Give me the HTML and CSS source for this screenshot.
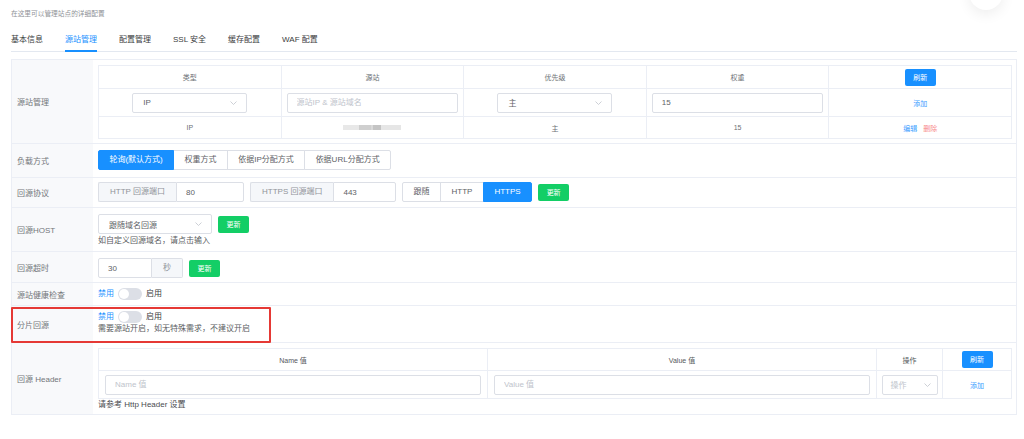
FILE: index.html
```html
<!DOCTYPE html>
<html lang="zh-CN">
<head>
<meta charset="utf-8">
<title>源站管理</title>
<link rel="stylesheet" href="styles.css">
</head>
<body>
<div class="avatar"></div>
<div class="page">
  <p class="subtitle">在这里可以管理站点的详细配置</p>
  <nav class="tabs">
    <span class="tab">基本信息</span>
    <span class="tab active">源站管理</span>
    <span class="tab">配置管理</span>
    <span class="tab">SSL 安全</span>
    <span class="tab">缓存配置</span>
    <span class="tab">WAF 配置</span>
  </nav>

  <div class="panel">
    <!-- 源站管理 -->
    <div class="row">
      <div class="label">源站管理</div>
      <div class="cell cell-origin">
        <table class="tbl">
          <thead>
            <tr>
              <th><div class="h h22">类型</div></th>
              <th><div class="h h22">源站</div></th>
              <th><div class="h h22">优先级</div></th>
              <th><div class="h h22">权重</div></th>
              <th><div class="h h22"><button class="btn-sm btn-blue">刷新</button></div></th>
            </tr>
          </thead>
          <tbody>
            <tr>
              <td><div class="h h27"><div class="select w115"><span>IP</span><svg class="chev" width="7" height="4" viewBox="0 0 7 4"><path d="M0.5 0.5L3.5 3.5L6.5 0.5" fill="none" stroke="#c0c4cc" stroke-width="0.8"/></svg></div></div></td>
              <td><div class="h h27"><input class="inp fill" placeholder="源站IP &amp; 源站域名"></div></td>
              <td><div class="h h27"><div class="select w115"><span>主</span><svg class="chev" width="7" height="4" viewBox="0 0 7 4"><path d="M0.5 0.5L3.5 3.5L6.5 0.5" fill="none" stroke="#c0c4cc" stroke-width="0.8"/></svg></div></div></td>
              <td><div class="h h27"><input class="inp fill" value="15"></div></td>
              <td><div class="h h27"><span class="link">添加</span></div></td>
            </tr>
            <tr>
              <td><div class="h h21 small">IP</div></td>
              <td><div class="h h21"><span class="masked"></span></div></td>
              <td><div class="h h21 small">主</div></td>
              <td><div class="h h21 small">15</div></td>
              <td><div class="h h21"><span class="link">编辑</span><span class="link del">删除</span></div></td>
            </tr>
          </tbody>
        </table>
      </div>
    </div>

    <!-- 负载方式 -->
    <div class="row">
      <div class="label">负载方式</div>
      <div class="cell cell-load">
        <div class="seg">
          <button class="btn on">轮询(默认方式)</button>
          <button class="btn">权重方式</button>
          <button class="btn">依据IP分配方式</button>
          <button class="btn">依据URL分配方式</button>
        </div>
      </div>
    </div>

    <!-- 回源协议 -->
    <div class="row">
      <div class="label">回源协议</div>
      <div class="cell cell-proto">
        <div class="inline">
          <div class="igroup port"><span class="addon">HTTP 回源端口</span><input class="inp" value="80"></div>
          <div class="igroup port"><span class="addon">HTTPS 回源端口</span><input class="inp" value="443"></div>
          <div class="seg seg-proto">
            <button class="btn">跟随</button>
            <button class="btn">HTTP</button>
            <button class="btn on">HTTPS</button>
          </div>
          <button class="btn-sm btn-green">更新</button>
        </div>
      </div>
    </div>

    <!-- 回源HOST -->
    <div class="row">
      <div class="label">回源HOST</div>
      <div class="cell cell-host">
        <div class="inline">
          <div class="select w114"><span>跟随域名回源</span><svg class="chev" width="7" height="4" viewBox="0 0 7 4"><path d="M0.5 0.5L3.5 3.5L6.5 0.5" fill="none" stroke="#c0c4cc" stroke-width="0.8"/></svg></div>
          <button class="btn-sm btn-green">更新</button>
        </div>
        <div class="hint">如自定义回源域名，请点击输入</div>
      </div>
    </div>

    <!-- 回源超时 -->
    <div class="row">
      <div class="label">回源超时</div>
      <div class="cell cell-timeout">
        <div class="inline">
          <div class="igroup secs"><input class="inp" value="30"><span class="addon">秒</span></div>
          <button class="btn-sm btn-green">更新</button>
        </div>
      </div>
    </div>

    <!-- 源站健康检查 -->
    <div class="row">
      <div class="label">源站健康检查</div>
      <div class="cell cell-health">
        <div class="switch-line l16">
          <span class="off-text">禁用</span>
          <span class="switch"><span class="knob"></span></span>
          <span class="on-text">启用</span>
        </div>
      </div>
    </div>

    <!-- 分片回源 -->
    <div class="row">
      <div class="label">分片回源</div>
      <div class="cell cell-range">
        <div class="switch-line l12">
          <span class="off-text">禁用</span>
          <span class="switch"><span class="knob"></span></span>
          <span class="on-text">启用</span>
        </div>
        <div class="hint l12">需要源站开启，如无特殊需求，不建议开启</div>
      </div>
      <div class="mark"></div>
    </div>

    <!-- 回源 Header -->
    <div class="row">
      <div class="label">回源 Header</div>
      <div class="cell cell-header">
        <table class="tbl tbl2">
          <colgroup>
            <col class="c-name"><col class="c-value"><col class="c-op"><col class="c-act">
          </colgroup>
          <thead>
            <tr>
              <th><div class="h h21 th2">Name 值</div></th>
              <th><div class="h h21 th2">Value 值</div></th>
              <th><div class="h h21 th2">操作</div></th>
              <th><div class="h h21"><button class="btn-sm btn-blue">刷新</button></div></th>
            </tr>
          </thead>
          <tbody>
            <tr>
              <td><div class="h h27"><input class="inp fill6" placeholder="Name 值"></div></td>
              <td><div class="h h27"><input class="inp fill6" placeholder="Value 值"></div></td>
              <td><div class="h h27"><div class="select w56 ph"><span>操作</span><svg class="chev" width="7" height="4" viewBox="0 0 7 4"><path d="M0.5 0.5L3.5 3.5L6.5 0.5" fill="none" stroke="#c0c4cc" stroke-width="0.8"/></svg></div></div></td>
              <td><div class="h h27"><span class="link">添加</span></div></td>
            </tr>
          </tbody>
        </table>
        <div class="hint l12 dark">请参考 Http Header 设置</div>
      </div>
    </div>
  </div>
</div>
</body>
</html>
```

FILE: styles.css
```css
* { box-sizing: border-box; }

html, body {
  margin: 0;
  padding: 0;
  background: #fff;
}

body {
  position: relative;
  overflow: hidden;
  font-family: "Liberation Sans", "Noto Sans CJK SC", sans-serif;
  font-size: 8px;
  color: #606266;
}

.avatar {
  position: absolute;
  top: -24px;
  left: 969px;
  width: 34px;
  height: 34px;
  border-radius: 50%;
  background: #fff;
  box-shadow: 0 4px 14px rgba(0, 0, 0, 0.07);
}

.page {
  padding: 0 7px 0 11px;
}

.subtitle {
  margin: 0;
  padding-top: 9px;
  line-height: 10px;
  font-size: 6.7px;
  color: #8f9297;
}

.tabs {
  display: flex;
  margin-top: 9px;
  margin-bottom: 7px;
  border-bottom: 1px solid #e3e8f0;
}

.tab {
  position: relative;
  padding: 6px 0 5px;
  margin-right: 22px;
  line-height: 12px;
  color: #3a3c40;
}

.tab.active { color: #1890ff; }

.tab.active::after {
  content: "";
  position: absolute;
  left: 0;
  right: 0;
  bottom: -1px;
  height: 2px;
  background: #1890ff;
}

/* panel */
.panel {
  border: 1px solid #ebeef5;
  border-bottom: none;
}

.row {
  position: relative;
  display: grid;
  grid-template-columns: 81px 1fr;
  border-bottom: 1px solid #ebeef5;
}

.label {
  display: flex;
  align-items: center;
  padding-left: 5px;
  background: #f8f9fb;
  color: #73767a;
}

.cell {
  display: flex;
  flex-direction: column;
  justify-content: center;
  align-items: flex-start;
  padding: 0 4px 0 5px;
}

.cell-origin { padding-top: 5px; padding-bottom: 4px; align-items: stretch; }
.cell-load { padding-top: 6px; padding-bottom: 7px; }
.cell-proto { padding-top: 4px; padding-bottom: 5px; }
.cell-host { padding-top: 6px; padding-bottom: 4px; }
.cell-timeout { padding-top: 6px; padding-bottom: 4px; }
.cell-health { padding-top: 3px; padding-bottom: 3px; }
.cell-range { padding-top: 5px; padding-bottom: 7px; }
.cell-header { padding-top: 5px; padding-bottom: 3px; align-items: stretch; }

/* tables */
.tbl {
  width: 100%;
  table-layout: fixed;
  border-collapse: separate;
  border-spacing: 0;
  border-top: 1px solid #ebeef5;
  border-left: 1px solid #ebeef5;
}

.tbl th,
.tbl td {
  padding: 0;
  border-right: 1px solid #ebeef5;
  border-bottom: 1px solid #ebeef5;
  font-weight: normal;
  text-align: center;
  vertical-align: middle;
}

.h {
  display: flex;
  align-items: center;
  justify-content: center;
  font-size: 7px;
  color: #6e7176;
}

.h22 { height: 22px; }
.h27 { height: 27px; }
.h21 { height: 21px; }

.th2 { color: #55585c; }

.c-name { width: 389px; }
.c-value { width: 389px; }
.c-op { width: 66px; }
.c-act { width: 69px; }

/* form controls */
.inp {
  height: 20px;
  padding: 0 9px;
  border: 1px solid #dcdfe6;
  border-radius: 2px;
  background: #fff;
  font-family: inherit;
  font-size: 8px;
  color: #606266;
  outline: none;
}

.inp::placeholder { color: #c0c4cc; }

.fill { width: calc(100% - 10px); margin: 0 5px; }
.fill6 { width: calc(100% - 12px); margin: 0 6px; }

.select {
  display: flex;
  align-items: center;
  justify-content: space-between;
  height: 20px;
  padding: 0 9px 0 10px;
  border: 1px solid #dcdfe6;
  border-radius: 2px;
  background: #fff;
  font-size: 8px;
  color: #606266;
}

.select.ph { color: #c0c4cc; }

.w115 { width: 115px; }
.w114 { width: 114px; }
.w56 { width: 56px; padding: 0 6px 0 8px; }

.chev { display: block; }

.inline {
  display: flex;
  align-items: center;
  gap: 6px;
}

.igroup {
  display: flex;
  height: 20px;
}

.addon {
  padding: 0 11px;
  border: 1px solid #dcdfe6;
  background: #f5f7fa;
  color: #909399;
  line-height: 18px;
  white-space: nowrap;
}

.port { width: 146px; }
.port .addon { border-right: none; border-radius: 2px 0 0 2px; }
.port .inp { flex: 1; min-width: 0; border-radius: 0 2px 2px 0; }

.secs .inp { width: 54px; border-radius: 2px 0 0 2px; }
.secs .addon { border-left: none; border-radius: 0 2px 2px 0; }

.seg { display: flex; }
.seg-proto { margin-left: 0; }

.btn {
  height: 20px;
  padding: 0 10.4px;
  border: 1px solid #dcdfe6;
  background: #fff;
  font-family: inherit;
  font-size: 8px;
  line-height: 18px;
  color: #606266;
  white-space: nowrap;
}

.seg-proto .btn { padding: 0 10.5px; }

.seg .btn + .btn { margin-left: -1px; }
.seg .btn:first-child { border-radius: 2px 0 0 2px; }
.seg .btn:last-child { border-radius: 0 2px 2px 0; }

.seg .btn.on {
  position: relative;
  z-index: 1;
  background: #1890ff;
  border-color: #1890ff;
  color: #fff;
}

.btn-sm {
  width: 31px;
  height: 17px;
  padding: 0;
  border: none;
  border-radius: 2px;
  font-family: inherit;
  font-size: 7px;
  line-height: 17px;
  color: #fff;
}

.btn-blue { background: #1890ff; }
.btn-green { background: #13ce66; }

.link { font-size: 7px; color: #409eff; }
.link.del { margin-left: 6px; color: #f78989; }

.masked {
  display: inline-block;
  width: 58px;
  height: 5px;
  background: linear-gradient(90deg, #e8e8e8 0 28%, #cfcfcf 28% 48%, #d9d9d9 48% 52%, #c4c4c4 52% 66%, #e6e6e6 66% 100%);
  filter: blur(0.6px);
}

.small { font-size: 7px; }

.hint {
  line-height: 13px;
  color: #5a5d61;
}

.l12 { line-height: 12px; }
.l16 { line-height: 16px; }
.dark { color: #4a4c50; }

.switch-line {
  display: flex;
  align-items: center;
  gap: 4px;
}

.off-text { color: #1890ff; }
.on-text { color: #3a3c40; }

.switch {
  display: flex;
  align-items: center;
  width: 24px;
  height: 12px;
  padding: 1px;
  border-radius: 6px;
  background: #dcdfe6;
}

.knob {
  width: 10px;
  height: 10px;
  border-radius: 50%;
  background: #fff;
}

/* annotation box */
.mark {
  position: absolute;
  left: -1px;
  top: 1px;
  width: 260px;
  height: 36px;
  border: 2px solid #e53935;
  border-radius: 1px;
  pointer-events: none;
}
```
